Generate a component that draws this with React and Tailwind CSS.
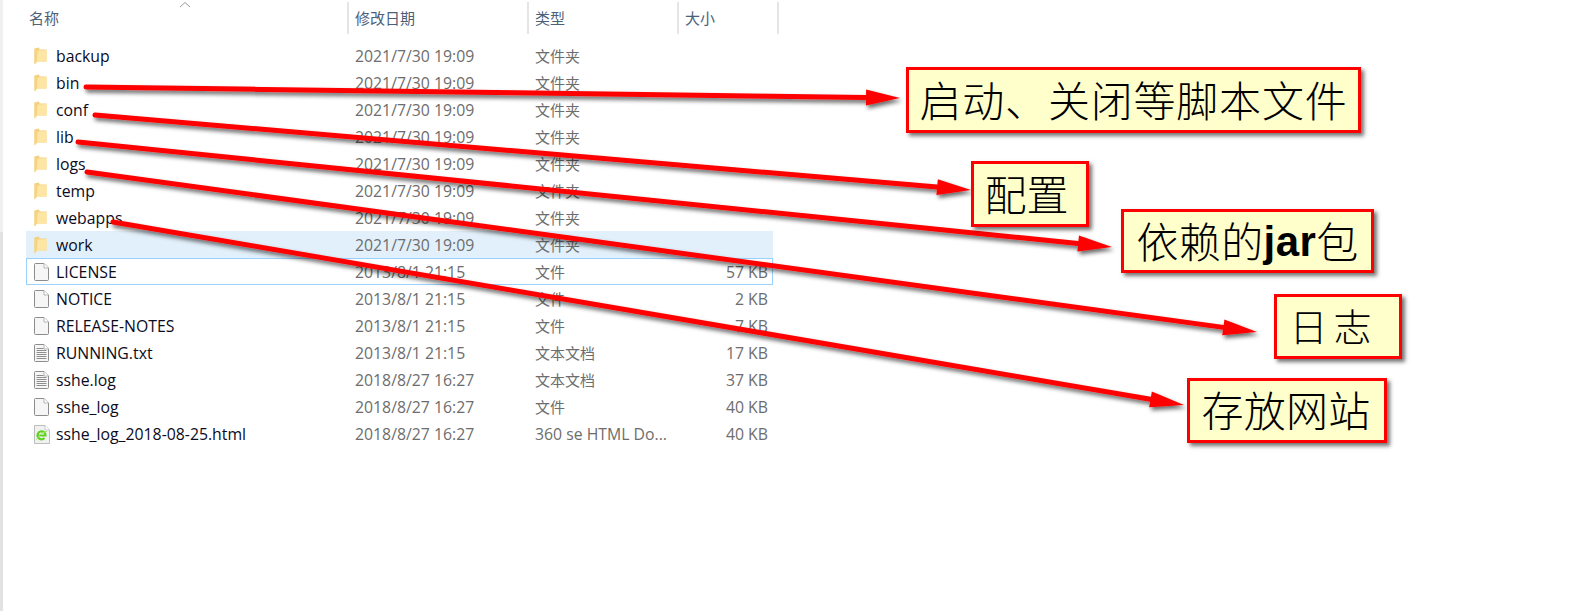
const uiFont = { fontFamily: '"Open Sans", "Noto Sans CJK SC", sans-serif' };

const files = [
  { name: 'backup', date: '2021/7/30 19:09', type: '文件夹', icon: 'folder' },
  { name: 'bin', date: '2021/7/30 19:09', type: '文件夹', icon: 'folder' },
  { name: 'conf', date: '2021/7/30 19:09', type: '文件夹', icon: 'folder' },
  { name: 'lib', date: '2021/7/30 19:09', type: '文件夹', icon: 'folder' },
  { name: 'logs', date: '2021/7/30 19:09', type: '文件夹', icon: 'folder' },
  { name: 'temp', date: '2021/7/30 19:09', type: '文件夹', icon: 'folder' },
  { name: 'webapps', date: '2021/7/30 19:09', type: '文件夹', icon: 'folder' },
  { name: 'work', date: '2021/7/30 19:09', type: '文件夹', icon: 'folder', state: 'hover' },
  { name: 'LICENSE', date: '2013/8/1 21:15', type: '文件', size: '57 KB', icon: 'file', state: 'focus' },
  { name: 'NOTICE', date: '2013/8/1 21:15', type: '文件', size: '2 KB', icon: 'file' },
  { name: 'RELEASE-NOTES', date: '2013/8/1 21:15', type: '文件', size: '7 KB', icon: 'file' },
  { name: 'RUNNING.txt', date: '2013/8/1 21:15', type: '文本文档', size: '17 KB', icon: 'text' },
  { name: 'sshe.log', date: '2018/8/27 16:27', type: '文本文档', size: '37 KB', icon: 'text' },
  { name: 'sshe_log', date: '2018/8/27 16:27', type: '文件', size: '40 KB', icon: 'file' },
  { name: 'sshe_log_2018-08-25.html', date: '2018/8/27 16:27', type: '360 se HTML Do...', size: '40 KB', icon: 'html', latinType: true },
];

const arrows = [
  { x1: 86, y1: 87, x2: 900, y2: 98 },
  { x1: 95, y1: 115, x2: 971, y2: 190 },
  { x1: 78, y1: 142, x2: 1112, y2: 247 },
  { x1: 87, y1: 172, x2: 1257, y2: 332 },
  { x1: 113, y1: 222, x2: 1184, y2: 405 },
];

function FolderIcon() {
  return (
    <svg width="13" height="18" viewBox="0 0 13 18" className="shrink-0">
      <path d="M0.5 1.5 L5 0.5 L5.5 2.5 L12.5 2.5 L12.5 14.5 L3 14.5 L0.5 17.5 Z" fill="#f2cf7c" />
      <path d="M1.5 17.5 L3.5 3.5 L12.5 3 L12.5 14.5 L3 14.5 Z" fill="#fde6a4" />
      <path d="M0.5 2 L3.5 1.5 L3 14 L0.5 17.5 Z" fill="#f6d382" />
    </svg>
  );
}

function PageIcon({ lines }) {
  return (
    <svg width="15" height="18" viewBox="0 0 15 18" className="shrink-0">
      <path d="M0.5 1.5 Q0.5 0.5 1.5 0.5 L10 0.5 L14.5 5 L14.5 16.5 Q14.5 17.5 13.5 17.5 L1.5 17.5 Q0.5 17.5 0.5 16.5 Z" fill="#f6f6f6" stroke="#8c8c8c" />
      <path d="M10 0.5 L10 5 L14.5 5" fill="#ffffff" stroke="#b5b5b5" />
      {lines && [4, 6, 8, 10, 12, 14].map((y) => (
        <rect key={y} x="2.5" y={y} width={y < 6 ? 7 : 10} height="1" fill="#8e8e8e" />
      ))}
    </svg>
  );
}

function HtmlIcon() {
  return (
    <svg width="16" height="19" viewBox="0 0 16 19" className="shrink-0">
      <path d="M0.5 0.5 L11 0.5 L15.5 5 L15.5 18.5 L0.5 18.5 Z" fill="#f1f1f1" stroke="#bdbdbd" />
      <path d="M11 0.5 L11 5 L15.5 5" fill="#ffffff" stroke="#c9c9c9" />
      <path d="M4 10.5 L11.5 10.5 A4 4 0 1 0 10.5 13" fill="none" stroke="#5fd21f" strokeWidth="2.2" />
      <path d="M2.5 14.5 Q7 7 13 6.5" fill="none" stroke="#9ae66a" strokeWidth="1" />
    </svg>
  );
}

function FileIcon({ kind }) {
  if (kind === 'folder') return <FolderIcon />;
  if (kind === 'html') return <HtmlIcon />;
  return <PageIcon lines={kind === 'text'} />;
}

function Row({ file }) {
  const rowState = {
    hover: 'bg-[#e2f0fb] border-[#e2f0fb]',
    focus: 'border-[#99d1ff]',
  }[file.state] ?? 'border-transparent';

  return (
    <div className={`grid h-[27px] grid-cols-[328px_180px_1fr_auto] items-center border pt-[1px] pr-[4px] text-[15.8px] leading-[20px] ${rowState}`}>
      <div className="flex items-center gap-[7px] pl-[7px]">
        <div className="flex w-[15px] justify-start"><FileIcon kind={file.icon} /></div>
        <span className="text-[#0b0b1c]">{file.name}</span>
      </div>
      <span className="text-[#6d6d6d]">{file.date}</span>
      <span className={file.latinType ? 'text-[15.8px] text-[#6d6d6d]' : 'text-[15px] text-[#6d6d6d]'}>{file.type}</span>
      <span className="text-right text-[#6d6d6d]">{file.size}</span>
    </div>
  );
}

function HeaderCell({ label, width, inset = 'pl-[6px]' }) {
  return (
    <div className={`flex h-[32px] items-center border-r-2 border-[#e5e5e5] text-[15px] text-[#4c607a] ${inset} ${width}`}>
      {label}
    </div>
  );
}

function Callout({ className, children }) {
  return (
    <div className={`absolute flex items-center justify-center border-[3px] border-[#f00] bg-[#ffffcc] font-light whitespace-nowrap text-black shadow-[3px_3px_4px_rgba(0,0,0,0.55)] ${className}`}>
      {children}
    </div>
  );
}

function Arrows() {
  return (
    <svg width="1574" height="611" className="absolute inset-0">
      <defs>
        <filter id="arrowShadow" x="-5%" y="-30%" width="110%" height="160%">
          <feDropShadow dx="2" dy="3" stdDeviation="2" floodColor="#000000" floodOpacity="0.6" />
        </filter>
      </defs>
      {arrows.map((a) => {
        const len = Math.hypot(a.x2 - a.x1, a.y2 - a.y1);
        const ux = (a.x2 - a.x1) / len;
        const uy = (a.y2 - a.y1) / len;
        const bx = a.x2 - ux * 34;
        const by = a.y2 - uy * 34;
        const head = `${a.x2},${a.y2} ${bx - uy * 8},${by + ux * 8} ${bx + uy * 8},${by - ux * 8}`;
        return (
          <g key={a.x1} filter="url(#arrowShadow)">
            <line x1={a.x1} y1={a.y1} x2={bx} y2={by} stroke="#f00" strokeWidth="5" strokeLinecap="round" />
            <polygon points={head} fill="#f00" />
          </g>
        );
      })}
    </svg>
  );
}

export default function App() {
  return (
    <div className="relative flex h-[611px] w-[1574px] overflow-hidden bg-white" style={uiFont}>
      <div className="flex w-[3px] flex-col bg-[#f0f0f0]">
        <div className="mt-[232px] flex-1 bg-[#e2e2e2]" />
      </div>

      <div className="flex-1">
        <div className="flex pt-[2px] pl-[23px]">
          <HeaderCell label="名称" width="w-[323px]" inset="pl-[3px]" />
          <HeaderCell label="修改日期" width="w-[180px]" />
          <HeaderCell label="类型" width="w-[150px]" />
          <HeaderCell label="大小" width="w-[100px]" />
        </div>

        <div className="mt-[8px] ml-[23px] w-[747px]">
          {files.map((file) => (
            <Row key={file.name} file={file} />
          ))}
        </div>
      </div>

      <Arrows />

      <Callout className="top-[67px] left-[906px] h-[66px] w-[455px] text-[42px] tracking-[0.8px]">启动、关闭等脚本文件</Callout>
      <Callout className="top-[161px] left-[971px] h-[66px] w-[118px] pr-[7px] text-[42px]">配置</Callout>
      <Callout className="top-[209px] left-[1121px] h-[64px] w-[253px] text-[42px] tracking-[0.4px]">
        依赖的<span className="font-bold" style={{ fontFamily: '"Liberation Sans", sans-serif' }}>jar</span>包
      </Callout>
      <Callout className="top-[294px] left-[1274px] h-[65px] w-[128px] pr-[9px] text-[38px] tracking-[6px]">日志</Callout>
      <Callout className="top-[378px] left-[1187px] h-[65px] w-[200px] pr-[2px] text-[42px] tracking-[0.3px]">存放网站</Callout>

      <svg width="14" height="8" viewBox="0 0 14 8" className="absolute top-[1px] left-[178px]">
        <path d="M2 6 L7 1.5 L12 6" fill="none" stroke="#9a9a9a" strokeWidth="1" />
      </svg>
    </div>
  );
}
